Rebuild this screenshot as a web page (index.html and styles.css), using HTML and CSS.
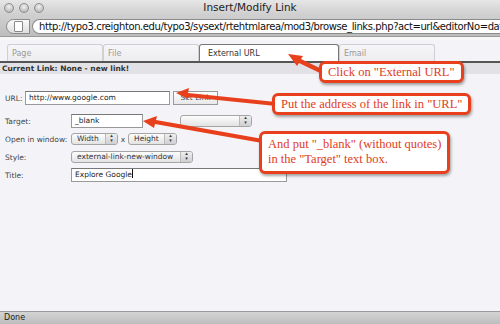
FILE: index.html
```html
<!DOCTYPE html>
<html lang="en">
<head>
<meta charset="UTF-8">
<title>Insert/Modify Link</title>
<link rel="stylesheet" href="styles.css">
</head>
<body>
<div class="win">
  <div class="titlebar">
    <div class="lights"><span></span><span></span><span></span></div>
    <div class="wtitle">Insert/Modify Link</div>
  </div>
  <div class="addrbar">
    <div class="addr">
      <span class="pageicon"><i></i></span>
      <span class="url">http://typo3.creighton.edu/typo3/sysext/rtehtmlarea/mod3/browse_links.php?act=url&amp;editorNo=data[tt_</span>
    </div>
  </div>
  <div class="content">
    <div class="tabs">
      <div class="tab">Page</div>
      <div class="tab">File</div>
      <div class="tab active">External URL</div>
      <div class="tab">Email</div>
    </div>
    <div class="curlink">Current Link: None - new link!</div>
    <div class="form">
      <div class="row urlrow">
        <span class="lbl-s">URL:</span>
        <span class="inp w-url">http://www.google.com</span>
        <span class="btn">Set Link</span>
      </div>
      <div class="row">
        <span class="lbl">Target:</span>
        <span class="inp w-target">_blank</span>
        <span class="sel w-tsel"></span>
      </div>
      <div class="row">
        <span class="lbl">Open in window:</span>
        <span class="sel w-wh">Width</span>
        <span class="x">x</span>
        <span class="sel w-wh">Height</span>
      </div>
      <div class="row">
        <span class="lbl">Style:</span>
        <span class="sel w-style">external-link-new-window</span>
      </div>
      <div class="row">
        <span class="lbl">Title:</span>
        <span class="inp w-title">Explore Google<b class="caret"></b></span>
      </div>
    </div>
  </div>
  <div class="status">Done</div>

  <svg class="arrows" width="500" height="324" viewBox="0 0 500 324">
    <g fill="#e8401c">
      <path d="M326 71 L301 59 L303 56 L288 54 L297 66 L299 63 L324 75 Z"/>
      <path d="M276 102 L188 93 L189 88 L176 93 L188 99 L188 97 L276 106 Z"/>
      <path d="M263 139 L156 120 L157 116 L143 121 L154 128 L155 124 L262 143 Z"/>
    </g>
  </svg>
  <div class="note n1">Click on "External URL"</div>
  <div class="note n2">Put the address of the link in "URL"</div>
  <div class="note n3">And put "_blank" (without quotes)<br>in the "Target" text box.</div>
</div>
</body>
</html>
```
FILE: styles.css
```css
html,body{ margin:0; padding:0; width:500px; height:324px; overflow:hidden;}
body{ font-family:"DejaVu Sans", "Liberation Sans", sans-serif; color:#333;}
.win{ position:relative; width:500px; height:324px; display:flex; flex-direction:column; background:#f4f4f8;}

.titlebar{ height:16px; background:linear-gradient(#e6e6e6,#cdcdcd); display:flex; align-items:center; position:relative;}
.lights{ display:flex; gap:5px; padding-left:4px;}
.lights span{ width:10px; height:10px; border-radius:50%; background:radial-gradient(circle at 50% 35%,#f2f2f2,#a9a9a9); border:1px solid #8e8e8e; box-sizing:border-box;}
.wtitle{ position:absolute; left:0; right:0; top:1px; text-align:center; font-size:10.5px; color:#222;}

.addrbar{ height:20px; background:linear-gradient(#cfcfcf,#bdbdbd); display:flex; align-items:center; padding-left:6px; border-bottom:1px solid #9a9a9a;}
.addr{ flex:1; height:15px; display:flex; align-items:center; overflow:hidden; white-space:nowrap;}
.pageicon{ width:24px; height:15px; box-sizing:border-box; border:1px solid #8a8a8a; border-radius:8px 0 0 8px; background:linear-gradient(#fafafa,#dedede); display:flex; align-items:center; justify-content:center;}
.pageicon i{ width:7px; height:9px; border:1px solid #888; background:#fff; border-radius:1px;}
.url{ flex:1; height:15px; box-sizing:border-box; background:#fff; border:1px solid #8a8a8a; border-right:none; border-radius:8px 0 0 8px; margin-left:2px; font-size:10px; line-height:13px; color:#111; padding-left:6px; letter-spacing:-0.4px; overflow:hidden;}

.content{ flex:1; background:#f4f4f8; border-top:3px solid #f8f8f8;}
.tabs{ display:flex; padding:4px 0 0 7px; height:17px; border-bottom:2px solid #555;}
.tab{ width:96px; height:17px; box-sizing:border-box; border:1px solid #d0d0d4; border-bottom:none; border-radius:3px 3px 0 0; background:linear-gradient(#f6f6f8,#ededf0); font-size:8px; color:#9a9a9a; padding:4px 0 0 4px;}
.tab.active{ width:140px; background:#fff; border-color:#777; color:#333; padding-left:8px;}
.curlink{ height:11px; background:#e2e2e6; font-size:7.5px; font-weight:bold; color:#333; padding-left:2px; line-height:11px;}

.form{ padding:17px 0 0 5px; font-size:7.5px; color:#444;}
.row{ display:flex; align-items:center; height:14px; margin-bottom:4px;}
.urlrow{ margin-bottom:9px;}
.lbl{ width:66px;}
.lbl-s{ width:20px;}
.inp{ height:14px; box-sizing:border-box; background:#fff; border:1px solid #999; border-top-color:#777; padding-left:3px; line-height:12px; font-size:7.5px; color:#222; white-space:nowrap;}
.w-url{ width:145px;}
.w-target{ width:72px;}
.w-title{ width:216px;}
.caret{ display:inline-block; width:1px; height:9px; background:#111; vertical-align:-1px;}
.btn{ margin-left:3px; width:45px; height:14px; box-sizing:border-box; border:1px solid #999; background:linear-gradient(#fff,#e8e8e8); font-size:7.5px; color:#444; text-align:center; line-height:12px;}
.sel{ position:relative; height:12px; box-sizing:border-box; border:1px solid #a5a5a5; border-radius:3px; background:linear-gradient(#fdfdfd,#e3e3e3); font-size:7.5px; color:#333; padding-left:5px; line-height:10px; white-space:nowrap;}
.sel::after{ content:""; position:absolute; right:0; top:0; bottom:0; width:11px; border-left:1px solid #bbb; background:linear-gradient(#eee,#cfcfd4); border-radius:0 2px 2px 0;}
.sel::before{ content:"\25B4\A\25BE"; white-space:pre; position:absolute; right:2px; top:-1px; font-size:5px; line-height:4.5px; color:#333; z-index:1; width:7px; text-align:center;}
.w-tsel{ width:72px; margin-left:37px;}
.w-wh{ width:47px;}
.w-wh:last-child{ width:49px;}
.x{ width:10px; text-align:center;}
.w-style{ width:122px;}

.status{ height:12px; background:linear-gradient(#d4d4d4,#bdbdbd); border-top:1px solid #9a9a9a; font-size:8px; color:#222; padding-left:4px; line-height:12px;}

.arrows{ position:absolute; left:0; top:0; pointer-events:none;}
.note{ position:absolute; background:#fff; border:3px solid #e8401c; border-radius:6px; box-shadow:1px 2px 3px rgba(0,0,0,.35); color:#e03c1c; font-family:"Liberation Serif", serif; font-size:12.5px; line-height:14px; padding:1px 6px; white-space:nowrap;}
.n1{ left:319px; top:61px;}
.n2{ left:272px; top:93px;}
.n3{ left:259px; top:131px; padding:3px 6px 4px; line-height:15px;}
```
